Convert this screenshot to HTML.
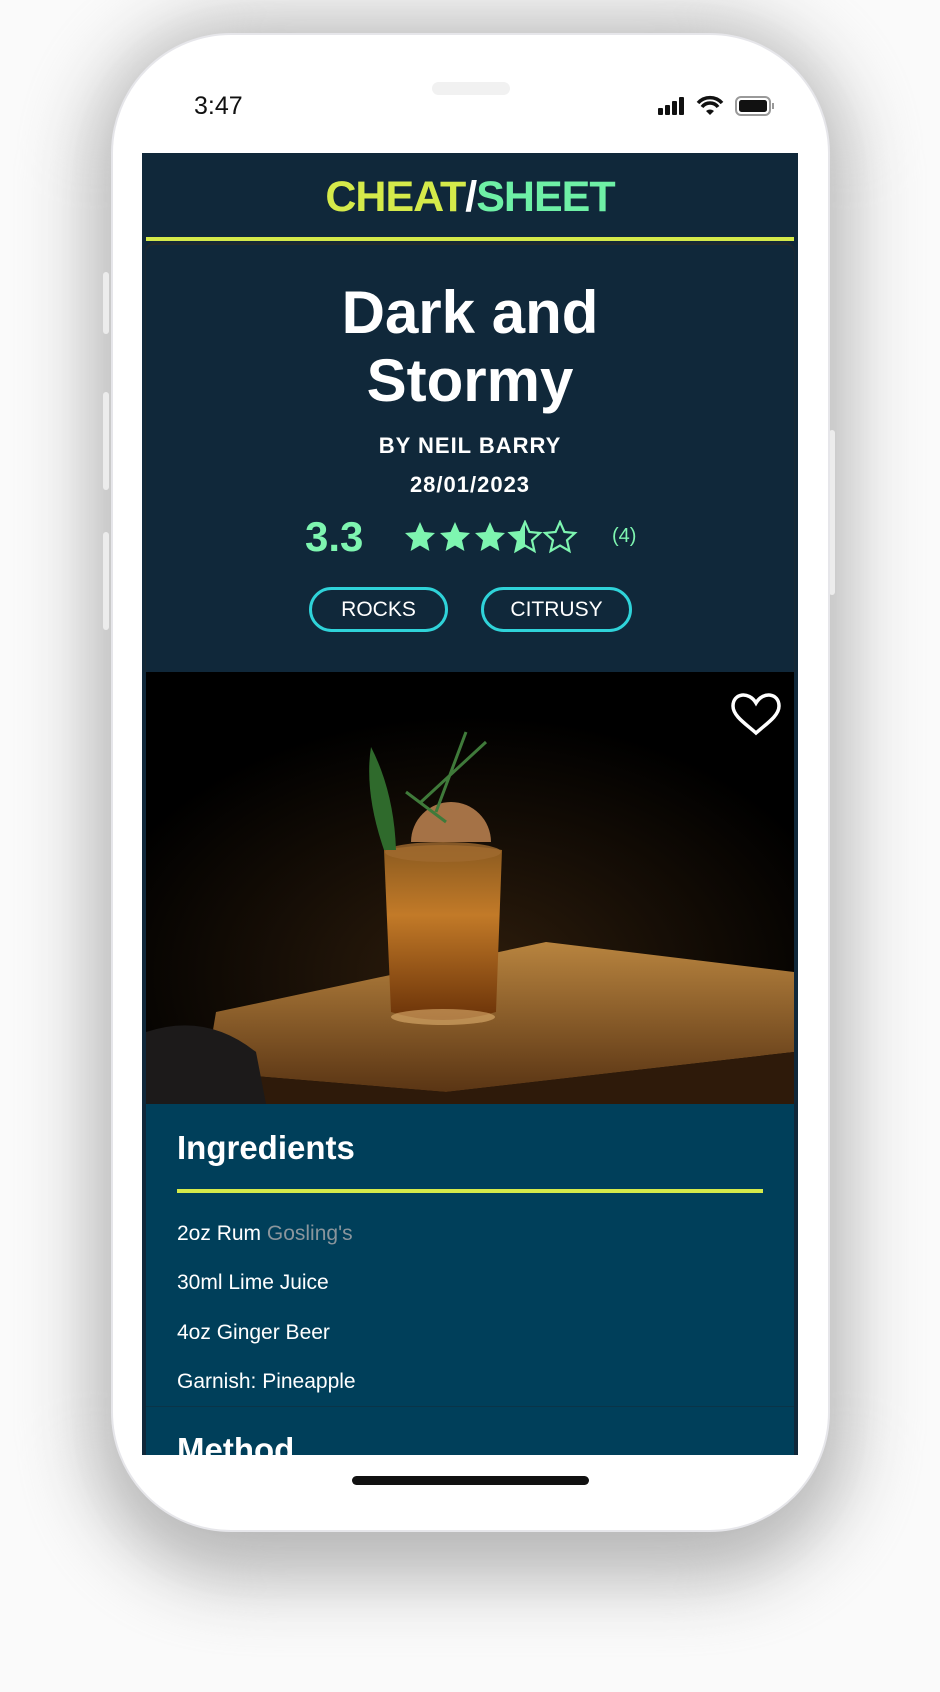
<!DOCTYPE html>
<html><head><meta charset="utf-8"><style>
*{margin:0;padding:0;box-sizing:border-box}
html,body{width:940px;height:1692px;background:#fafafa;overflow:hidden;font-family:"Liberation Sans",sans-serif}
.shadow{position:absolute;left:90px;top:20px;width:760px;height:1560px;border-radius:150px;background:#b4b4b4;filter:blur(35px);opacity:.95}
.phone{position:absolute;left:111px;top:33px;width:719px;height:1499px;border-radius:120px;background:#fff;border:2px solid #e6e6ea}
.btn{position:absolute;width:6px;background:#ececec;border-radius:3px}
.abs{position:absolute}
.screen{position:absolute;left:142px;top:153px;width:656px;height:1302px;background:#10283a;overflow:hidden}
.c{text-align:center;color:#fff;position:absolute;left:0;width:656px}
.pill{position:absolute;border:3px solid #2fd3d9;border-radius:24px;color:#fff;font-size:21px;text-align:center;line-height:39px;height:45px}
.ing{position:absolute;left:35px;color:#fff;font-size:21px}
</style></head><body>
<div class="shadow"></div>
<div class="btn" style="left:103px;top:272px;height:62px"></div>
<div class="btn" style="left:103px;top:392px;height:98px"></div>
<div class="btn" style="left:103px;top:532px;height:98px"></div>
<div class="btn" style="left:829px;top:430px;height:165px"></div>
<div class="phone"></div>
<div class="abs" style="left:432px;top:82px;width:78px;height:13px;border-radius:7px;background:#f1f1f1"></div>
<div class="abs" style="left:194px;top:92px;font-size:25px;color:#111">3:47</div>
<svg class="abs" style="left:655px;top:94px" width="125" height="26" viewBox="0 0 125 26">
<rect x="3" y="14" width="5" height="7" rx="1" fill="#111"/><rect x="10" y="11" width="5" height="10" rx="1" fill="#111"/><rect x="17" y="7" width="5" height="14" rx="1" fill="#111"/><rect x="24" y="3" width="5" height="18" rx="1" fill="#111"/>
<path d="M43 9 A16 16 0 0 1 67 9" stroke="#111" stroke-width="3.5" fill="none"/><path d="M47 13 A10 10 0 0 1 63 13" stroke="#111" stroke-width="3.5" fill="none"/><path d="M51 17 L55 21 L59 17 A6 6 0 0 0 51 17Z" fill="#111"/>
<rect x="81" y="3" width="34" height="18" rx="5" fill="none" stroke="#999" stroke-width="2"/><rect x="84" y="6" width="28" height="12" rx="2.5" fill="#111"/><rect x="117" y="9" width="2" height="6" fill="#999"/>
</svg>
<div class="screen">
 <div class="c" style="top:20px;font-size:43px;font-weight:bold;letter-spacing:-1px"><span style="color:#d5ea4a">CHEAT</span><span style="color:#fff">/</span><span style="color:#6ef0a6">SHEET</span></div>
 <div class="abs" style="left:4px;top:84px;width:648px;height:4px;background:#d5ea4a"></div>
 <div class="abs" style="left:4px;top:92px;width:648px;height:430px;background:#10283a;border-radius:8px 8px 0 0;box-shadow:0 -2px 2px #2a2a2a"></div>
 <div class="c" style="top:126px;font-size:60px;font-weight:bold;line-height:68px;letter-spacing:0">Dark and<br>Stormy</div>
 <div class="c" style="top:280px;font-size:22px;font-weight:bold;letter-spacing:1px">BY NEIL BARRY</div>
 <div class="c" style="top:319px;font-size:22px;font-weight:bold;letter-spacing:1px">28/01/2023</div>
 <div class="abs" style="left:163px;top:360px;font-size:42px;font-weight:bold;color:#7ef5b0">3.3</div>
 <svg class="abs" style="left:261px;top:367px" width="180" height="36" viewBox="0 0 180 36">
  <defs><path id="s" d="M17 2 L21.4 12 L32 13 L24 20.3 L26.4 31 L17 25.5 L7.6 31 L10 20.3 L2 13 L12.6 12Z"/></defs>
  <use href="#s" fill="#7ef5b0"/><use href="#s" x="35" fill="#7ef5b0"/><use href="#s" x="70" fill="#7ef5b0"/>
  <use href="#s" x="105" fill="none" stroke="#7ef5b0" stroke-width="2.2"/>
  <path d="M122 2 L122 25.5 L112.6 31 L115 20.3 L107 13 L117.6 12Z" fill="#7ef5b0"/>
  <use href="#s" x="140" fill="none" stroke="#7ef5b0" stroke-width="2.2"/>
 </svg>
 <div class="abs" style="left:470px;top:372px;font-size:20px;color:#7ef5b0">(4)</div>
 <div class="pill" style="left:167px;top:434px;width:139px">ROCKS</div>
 <div class="pill" style="left:339px;top:434px;width:151px">CITRUSY</div>
 <svg class="abs" style="left:4px;top:519px" width="648" height="432" viewBox="0 0 648 432">
  <defs>
   <radialGradient id="glow" cx="0.5" cy="0.7" r="0.6"><stop offset="0" stop-color="#2e1d0c"/><stop offset="1" stop-color="#000"/></radialGradient>
   <linearGradient id="tray" x1="0" y1="0" x2="0" y2="1"><stop offset="0" stop-color="#b8843f"/><stop offset="1" stop-color="#5a3514"/></linearGradient>
   <linearGradient id="liq" x1="0" y1="0" x2="0" y2="1"><stop offset="0" stop-color="#8a5a20"/><stop offset=".4" stop-color="#c27a28"/><stop offset="1" stop-color="#6a3208"/></linearGradient>
  </defs>
  <rect width="648" height="432" fill="url(#glow)"/>
  <polygon points="70,340 400,270 648,300 648,380 300,420 60,400" fill="url(#tray)"/>
  <polygon points="60,400 300,420 648,380 648,432 40,432" fill="#2e1a0a"/>
  <path d="M0 360 Q60 340 110 380 L120 432 L0 432Z" fill="#1c1a1a"/>
  <path d="M238 178 Q296 168 356 178 L350 340 Q296 356 245 340Z" fill="url(#liq)"/>
  <ellipse cx="297" cy="180" rx="58" ry="10" fill="#a06a30" opacity=".8"/>
  <path d="M265 170 a40 40 0 0 1 80 0Z" fill="#a57246"/>
  <path d="M225 75 Q218 120 238 178 L250 178 Q248 120 225 75Z" fill="#2f6a2c"/>
  <path d="M275 130 L340 70 M290 140 L320 60 M260 120 L300 150" stroke="#3f7a3a" stroke-width="3"/>
  <ellipse cx="297" cy="345" rx="52" ry="8" fill="#e0b070" opacity=".6"/>
  <path d="M610 31 C603 19 587 21 587 34 C587 44 600 52 610 61 C620 52 633 44 633 34 C633 21 617 19 610 31Z" fill="none" stroke="#fff" stroke-width="3.5"/>
 </svg>
 <div class="abs" style="left:4px;top:951px;width:648px;height:360px;background:#003f5a"></div>
 <div class="ing" style="top:976px;font-size:33px;font-weight:bold">Ingredients</div>
 <div class="abs" style="left:35px;top:1036px;width:586px;height:4px;background:#d5ea4a"></div>
 <div class="ing" style="top:1069px">2oz Rum <span style="color:#8a959c">Gosling's</span></div>
 <div class="ing" style="top:1118px">30ml Lime Juice</div>
 <div class="ing" style="top:1168px">4oz Ginger Beer</div>
 <div class="ing" style="top:1217px">Garnish: Pineapple</div>
 <div class="abs" style="left:4px;top:1253px;width:648px;height:1px;background:#0a3448"></div>
 <div class="ing" style="top:1278px;font-size:33px;font-weight:bold">Method</div>
</div>
<div class="abs" style="left:352px;top:1476px;width:237px;height:9px;border-radius:5px;background:#111"></div>
</body></html>
